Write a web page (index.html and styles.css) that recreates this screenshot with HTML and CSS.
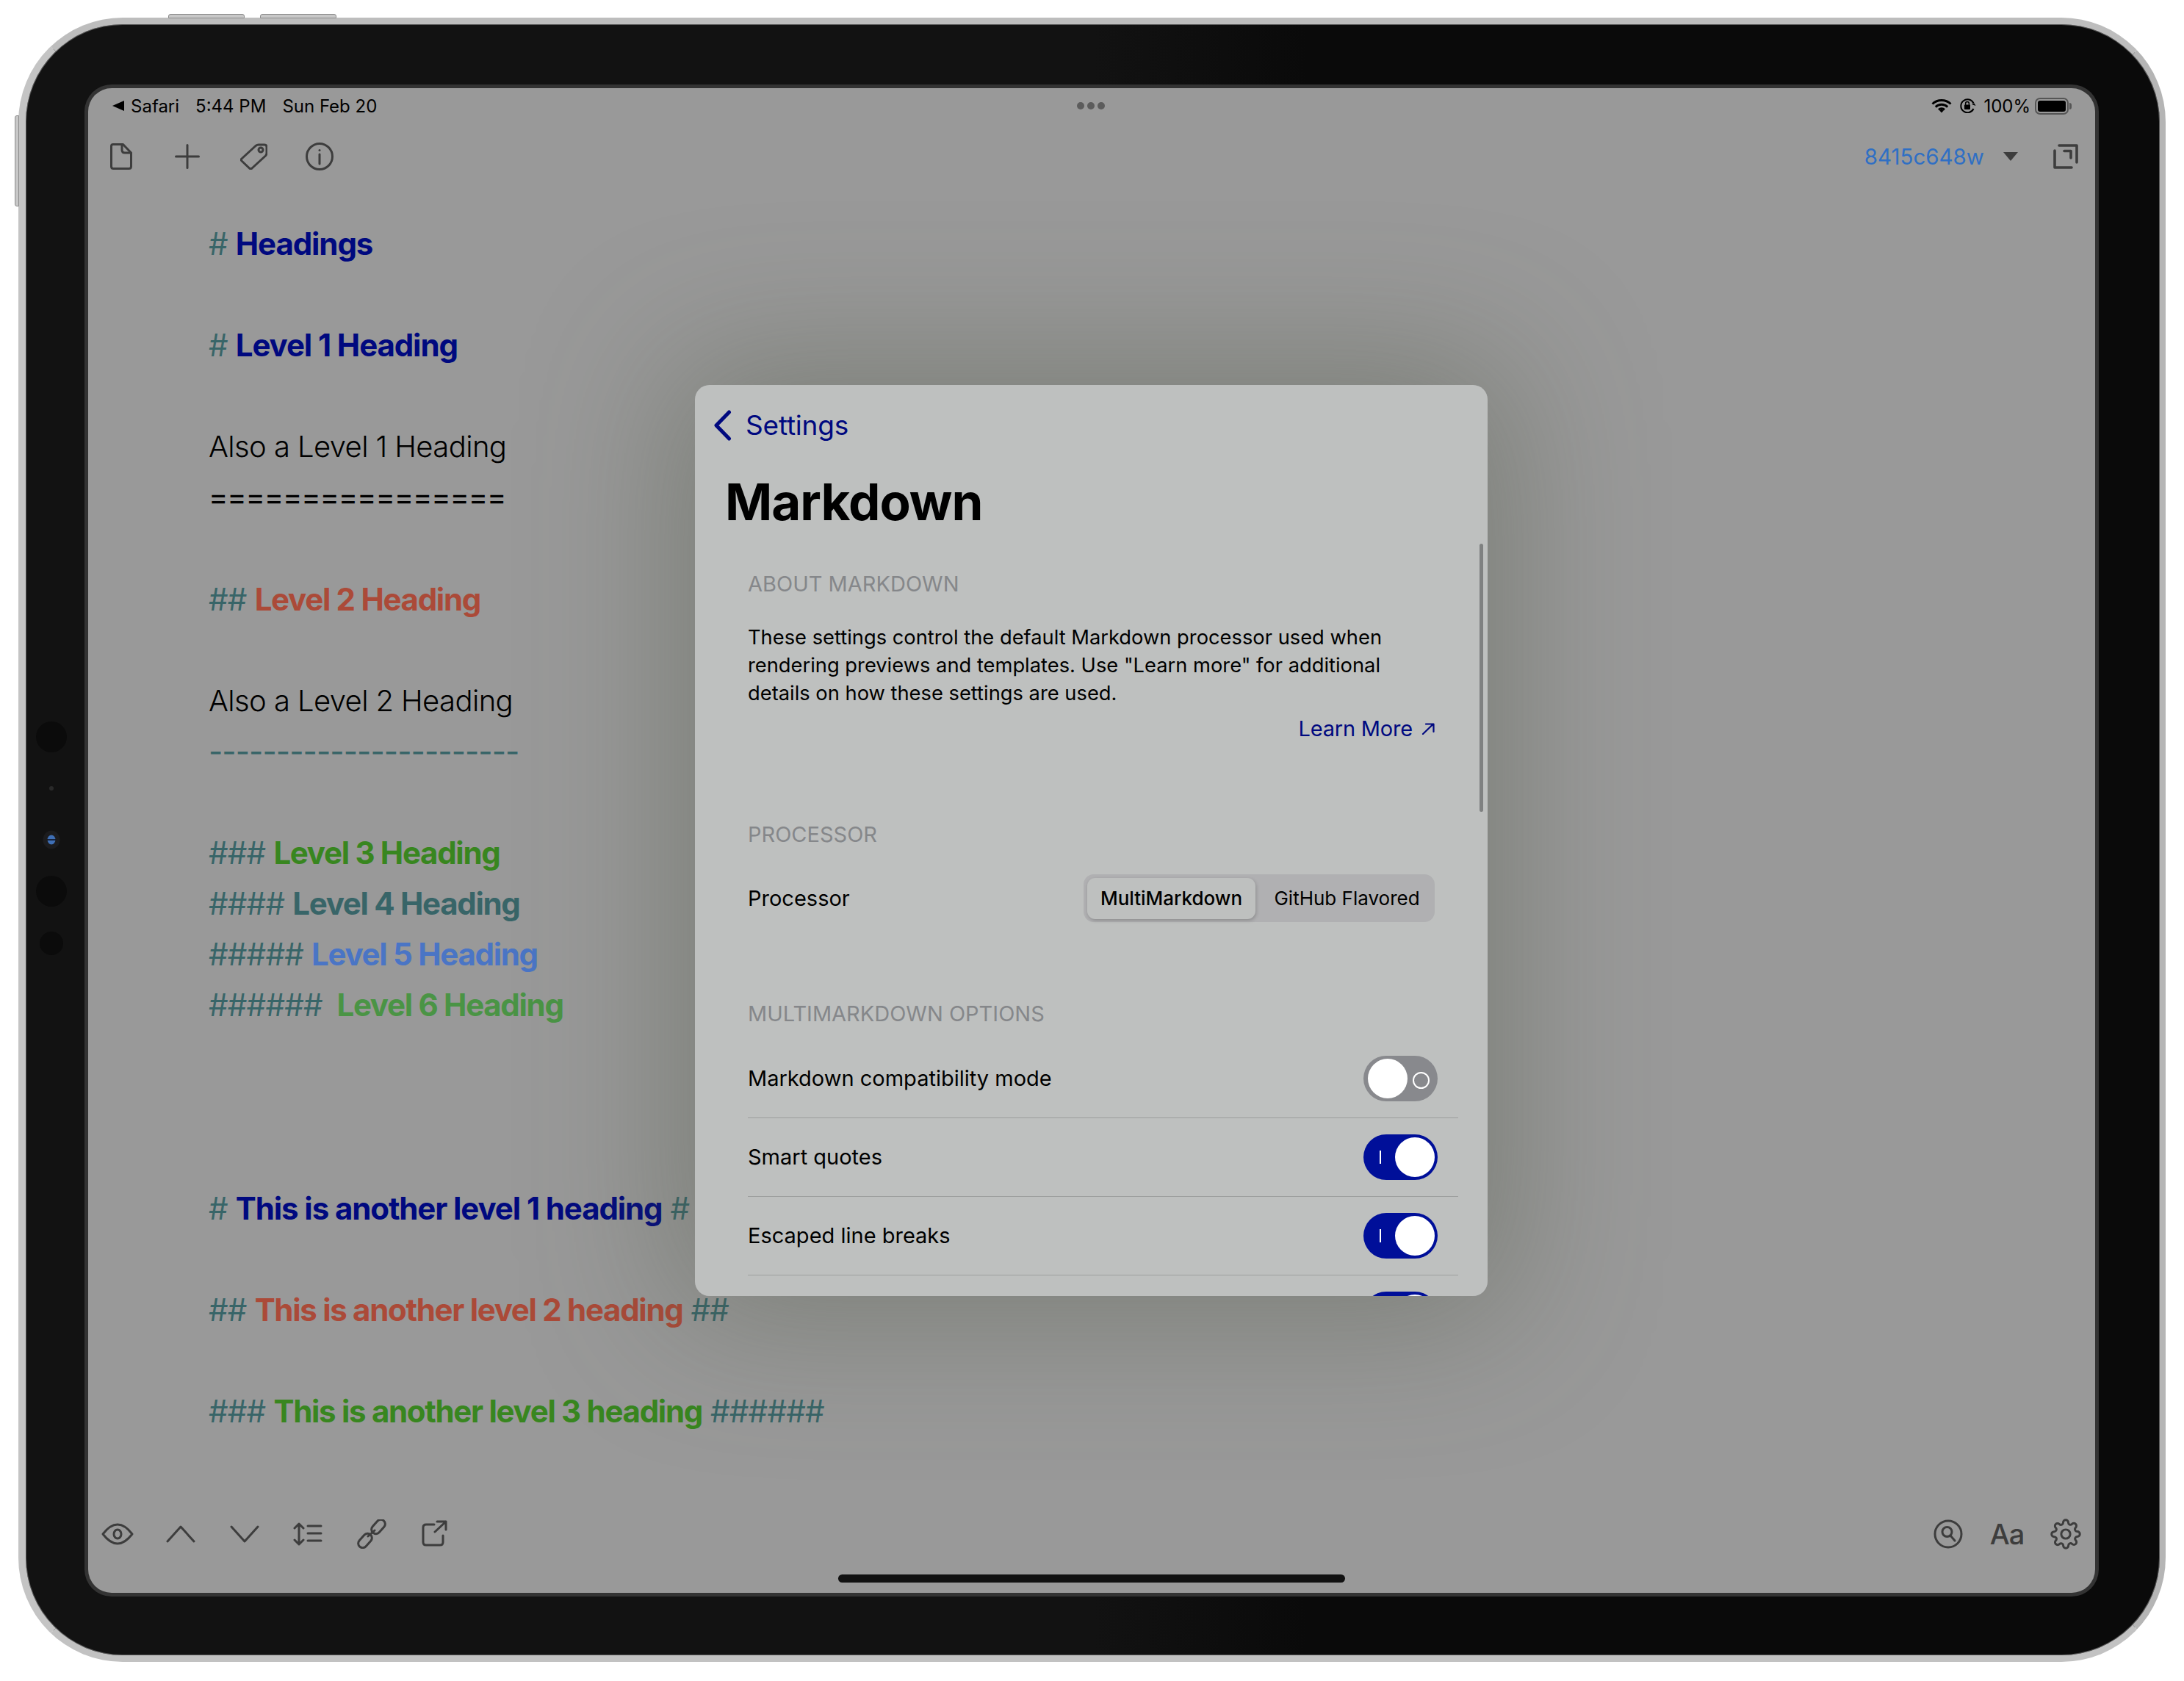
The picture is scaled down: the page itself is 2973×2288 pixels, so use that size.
FILE: index.html
```html
<!DOCTYPE html>
<html lang="en">
<head>
  <meta charset="UTF-8">
  <title>Markdown settings</title>
  <link rel="stylesheet" href="styles.css">
</head>
<body>
  <div class="device">
    <!-- hardware buttons -->
    <span class="hw hw-top-a"></span>
    <span class="hw hw-top-b"></span>
    <span class="hw hw-left"></span>

    <!-- camera cluster on the left bezel -->
    <span class="cam cam-a"></span>
    <span class="cam cam-dot"></span>
    <span class="cam cam-lens"></span>
    <span class="cam cam-b"></span>
    <span class="cam cam-c"></span>

    <div class="screen">
      <div class="status-bar">
        <div class="status-left">
          <span class="back-arrow"></span>
          <span class="status-app">Safari</span>
          <span class="status-time">5:44 PM</span>
          <span>Sun Feb 20</span>
        </div>
        <div class="status-dots"><i></i><i></i><i></i></div>
        <div class="status-right">
          <svg class="wifi" width="28" height="20" viewBox="0 0 28 20">
            <path d="M1.500 7.500a18 18 0 0 1 25 0M5.800 11.600a12 12 0 0 1 16.400 0M10 15.400a6 6 0 0 1 8 0" fill="none" stroke="#000" stroke-width="3"/>
            <path d="M11.200 16.600l2.800-2.400 2.800 2.400-2.800 3z" fill="#000"/>
          </svg>
          <svg class="lock" width="24" height="20" viewBox="0 0 24 20">
            <path d="M19.500 6.500A9 9 0 1 0 19.500 14" fill="none" stroke="#000" stroke-width="2"/>
            <path d="M17 8l3.500-1.500 2 3.500z" fill="#000"/>
            <rect x="7" y="8.500" width="8" height="6.500" rx="1" fill="#000"/>
            <path d="M8.600 9V7a2.400 2.400 0 0 1 4.800 0v2" fill="none" stroke="#000" stroke-width="1.500"/>
          </svg>
          <span class="battery-pct">100%</span>
          <span class="battery"><i></i></span>
        </div>
      </div>

      <div class="toolbar">
        <div class="tool-group top-left">
          <span class="tool"><svg width="30" height="36" viewBox="0 0 30 36"><path d="M4 1.500H17.500L28.500 13V31.500Q28.500 34.500 25.500 34.500H4.500Q1.500 34.500 1.500 31.500V4Q1.500 1.500 4 1.500Z"/><path d="M16 2V9Q16 13 20 13H28"/></svg></span>
          <span class="tool"><svg width="34" height="34" viewBox="0 0 34 34"><path d="M17 1.500V32.500M1.500 17H32.500"/></svg></span>
          <span class="tool"><svg width="37" height="36" viewBox="0 0 37 36"><path d="M2 21L21 3.500Q23 2 25 2H33Q36 2 36 5V13Q36 15.500 34.500 17L16 34Q14 35.500 12.500 34L2 24Q0.500 22.500 2 21Z"/><circle cx="28" cy="9" r="3"/></svg></span>
          <span class="tool"><svg width="38" height="38" viewBox="0 0 38 38"><circle cx="19" cy="19" r="17.500"/><path d="M19 16V29"/><circle class="solid" cx="19" cy="10.500" r="1.500"/></svg></span>
        </div>
        <div class="version-picker">
          <span class="version">8415c648w</span>
          <span class="caret"></span>
          <svg class="tool-svg heavy" width="34" height="34" viewBox="0 0 34 34"><path d="M8 2H32V25"/><path d="M15 9.500H24V19"/><path d="M2 9V32H25"/></svg>
        </div>
      </div>

      <main class="editor">
        <div class="line h1"><b># </b>Headings</div>
        <div class="line"></div>
        <div class="line h1"><b># </b>Level 1 Heading</div>
        <div class="line"></div>
        <div class="line plain">Also a Level 1 Heading</div>
        <div class="line rule">================</div>
        <div class="line"></div>
        <div class="line h2"><b>## </b>Level 2 Heading</div>
        <div class="line"></div>
        <div class="line plain">Also a Level 2 Heading</div>
        <div class="line marker">-----------------------</div>
        <div class="line"></div>
        <div class="line h3"><b>### </b>Level 3 Heading</div>
        <div class="line h4"><b>#### </b>Level 4 Heading</div>
        <div class="line h5"><b>##### </b>Level 5 Heading</div>
        <div class="line h6"><b>###### </b> Level 6 Heading</div>
        <div class="line"></div>
        <div class="line"></div>
        <div class="line"></div>
        <div class="line h1"><b># </b>This is another level 1 heading<b> #</b></div>
        <div class="line"></div>
        <div class="line h2"><b>## </b>This is another level 2 heading<b> ##</b></div>
        <div class="line"></div>
        <div class="line h3"><b>### </b>This is another level 3 heading<b> ######</b></div>
      </main>

      <div class="bottom-bar">
        <div class="tool-group bottom-left">
          <span class="tool"><svg width="44" height="30" viewBox="0 0 44 30"><path d="M2 15Q12 2 22 2T42 15Q32 28 22 28T2 15Z"/><ellipse cx="22" cy="15" rx="5" ry="6"/></svg></span>
          <span class="tool"><svg width="40" height="24" viewBox="0 0 40 24"><path d="M2 22L20 2L38 22"/></svg></span>
          <span class="tool"><svg width="40" height="24" viewBox="0 0 40 24"><path d="M2 2L20 22L38 2"/></svg></span>
          <span class="tool"><svg width="40" height="32" viewBox="0 0 40 32"><path d="M8 2V30M2 8L8 2L14 8M2 24L8 30L14 24M20 5H38M20 15H38M20 25H38"/></svg></span>
          <span class="tool"><svg width="40" height="40" viewBox="0 0 40 40"><rect x="18" y="4" width="22" height="12" rx="6" transform="rotate(-48 29 10)"/><rect x="0" y="23" width="22" height="12" rx="6" transform="rotate(-48 11 29)"/><path d="M15 23L24 15"/></svg></span>
          <span class="tool"><svg width="36" height="38" viewBox="0 0 36 38"><path d="M17 6H6Q2 6 2 10V30Q2 34 6 34H25Q29 34 29 30V21"/><path d="M18 16L33 2M21 2H33V13"/></svg></span>
        </div>
        <div class="tool-group bottom-right">
          <span class="tool"><svg width="40" height="40" viewBox="0 0 40 40"><circle cx="20" cy="20" r="18"/><circle cx="18.500" cy="17" r="6.500"/><path d="M23 22L29 29"/></svg></span>
          <span class="tool aa">Aa</span>
          <span class="tool"><svg width="42" height="42" viewBox="0 0 24 24"><circle class="thin" cx="12" cy="12" r="3.500"/><path class="thin" d="M19.400 15a1.650 1.650 0 0 0 .33 1.820l.06.06a2 2 0 0 1 0 2.830 2 2 0 0 1-2.830 0l-.06-.06a1.650 1.650 0 0 0-1.820-.33 1.650 1.650 0 0 0-1 1.510V21a2 2 0 0 1-2 2 2 2 0 0 1-2-2v-.09A1.650 1.650 0 0 0 9 19.400a1.650 1.650 0 0 0-1.820.33l-.06.06a2 2 0 0 1-2.830 0 2 2 0 0 1 0-2.830l.06-.06a1.650 1.650 0 0 0 .33-1.820 1.650 1.650 0 0 0-1.510-1H3a2 2 0 0 1-2-2 2 2 0 0 1 2-2h.09A1.650 1.650 0 0 0 4.600 9a1.650 1.650 0 0 0-.33-1.820l-.06-.06a2 2 0 0 1 0-2.830 2 2 0 0 1 2.830 0l.06.06a1.650 1.650 0 0 0 1.820.33H9a1.650 1.650 0 0 0 1-1.510V3a2 2 0 0 1 2-2 2 2 0 0 1 2 2v.09a1.650 1.650 0 0 0 1 1.510 1.650 1.650 0 0 0 1.820-.33l.06-.06a2 2 0 0 1 2.830 0 2 2 0 0 1 0 2.830l-.06.06a1.650 1.650 0 0 0-.33 1.820V9a1.650 1.650 0 0 0 1.510 1H21a2 2 0 0 1 2 2 2 2 0 0 1-2 2h-.09a1.650 1.650 0 0 0-1.510 1z"/></svg></span>
        </div>
      </div>

      <span class="home-indicator"></span>

      <!-- Settings-Popover -->
      <section class="modal">
        <span class="scrollbar"></span>
        <div class="modal-nav">
          <svg width="25" height="42" viewBox="0 0 25 42"><path d="M21.500 3L4 21L21.500 39"/></svg>
          <span>Settings</span>
        </div>
        <h1 class="modal-title">Markdown</h1>
        <div class="modal-body">
          <h2 class="section-label about-label">ABOUT MARKDOWN</h2>
          <p class="about-text">These settings control the default Markdown processor used when<br>rendering previews and templates. Use "Learn more" for additional<br>details on how these settings are used.</p>
          <div class="learn-more">Learn More
            <svg width="18" height="16" viewBox="0 0 18 16"><path d="M2 15L16 1.500M6 1.500H16.500V12"/></svg>
          </div>

          <h2 class="section-label spaced">PROCESSOR</h2>
          <div class="processor-row">
            <span>Processor</span>
            <div class="segmented">
              <span class="segment active">MultiMarkdown</span>
              <span class="segment other">GitHub Flavored</span>
            </div>
          </div>

          <h2 class="section-label spaced">MULTIMARKDOWN OPTIONS</h2>
          <ul class="options">
            <li class="option"><span>Markdown compatibility mode</span><span class="toggle off"></span></li>
            <li class="option"><span>Smart quotes</span><span class="toggle on"></span></li>
            <li class="option"><span>Escaped line breaks</span><span class="toggle on"></span></li>
            <li class="option"><span>&nbsp;</span><span class="toggle on"></span></li>
          </ul>
        </div>
      </section>
    </div>
  </div>
</body>
</html>
```

FILE: styles.css
```css
:root {
  --navy: #00097f;
  --teal: #386568;
  --icon: #3d3d3d;
  --screen: #999999;
  --modal: #bec0bf;
  --toggle-on: #000f99;
}

* {
  margin: 0;
  padding: 0;
  box-sizing: border-box;
}

html, body {
  width: 2973px;
  height: 2288px;
  overflow: hidden;
}

body {
  background: #fff;
  font-family: Inter, "Noto Sans", sans-serif;
  color: #000;
  padding: 24px 25px 0;
}

/* device frame */
.device {
  position: relative;
  width: 2923px;
  height: 2238px;
  padding: 87px 0 0 85px;
  border-radius: 142px;
  background: linear-gradient(90deg, #121212 0%, #121212 50%, #0a0a0a 60%, #0a0a0a 100%);
  border-style: solid;
  border-width: 9px 8px 9px 10px;
  border-color: #bdbdbd #b5b5b5 #c2c2c2 #c4c4c4;
  box-shadow: inset 0 0 0 1px #555;
}

.hw {
  position: absolute;
  background: #c8c8c8;
  border: 1px solid #8c8c8c;
}

.hw-top-a { left: 194px; top: -14px; width: 104px; height: 6px; border-radius: 3px 3px 0 0; }
.hw-top-b { left: 319px; top: -14px; width: 104px; height: 6px; border-radius: 3px 3px 0 0; }
.hw-left { left: -15px; top: 124px; width: 6px; height: 124px; border-radius: 3px 0 0 3px; }

.cam {
  position: absolute;
  border-radius: 50%;
  background: #0b0b0b;
  transform: translate(-50%, -50%);
}

.cam-a { left: 35px; top: 970px; width: 42px; height: 42px; }
.cam-dot { left: 35px; top: 1040px; width: 6px; height: 6px; background: #2a2a2a; }
.cam-lens {
  left: 35px;
  top: 1110px;
  width: 11px;
  height: 13px;
  background: linear-gradient(#3f6fb5 0 40%, #14233f 40% 60%, #3f6fb5 60%);
  box-shadow: 0 0 0 6px #1c1c1e;
}
.cam-b { left: 35px; top: 1180px; width: 42px; height: 42px; }
.cam-c { left: 35px; top: 1251px; width: 32px; height: 32px; }

.screen {
  position: relative;
  width: 2732px;
  height: 2048px;
  display: flex;
  flex-direction: column;
  background: var(--screen);
  border-radius: 32px;
  box-shadow: 0 0 0 5px #333;
  overflow: hidden;
}

/* status bar */
.status-bar {
  height: 48px;
  flex: none;
  display: grid;
  grid-template-columns: 1fr auto 1fr;
  align-items: center;
  padding: 0 36px 0 33px;
  font-size: 24px;
}

.status-left {
  display: flex;
  align-items: center;
}

.back-arrow {
  width: 0;
  height: 0;
  border-top: 7px solid transparent;
  border-bottom: 7px solid transparent;
  border-right: 16px solid #000;
  margin-right: 9px;
}

.status-app { margin-right: 22px; }
.status-time { margin-right: 22px; }

.status-dots {
  display: flex;
  gap: 4px;
}

.status-dots i {
  width: 10px;
  height: 10px;
  border-radius: 50%;
  background: #5c5c5c;
}

.status-right {
  display: flex;
  align-items: center;
  justify-content: flex-end;
}

.wifi { margin-right: 10px; }
.lock { margin-right: 9px; }
.battery-pct { margin-right: 6px; }

.battery {
  width: 46px;
  height: 23px;
  border: 2px solid #555;
  border-radius: 7px;
  padding: 2px;
  position: relative;
}

.battery i {
  display: block;
  height: 100%;
  background: #000;
  border-radius: 3px;
}

.battery::after {
  content: "";
  position: absolute;
  right: -6px;
  top: 5px;
  width: 3px;
  height: 9px;
  background: #555;
  border-radius: 0 3px 3px 0;
}

/* toolbars */
.toolbar, .bottom-bar {
  flex: none;
  height: 48px;
  display: flex;
  align-items: center;
  justify-content: space-between;
}

.toolbar { margin-top: 21px; }

.bottom-bar {
  margin-bottom: 56px;
  padding: 0 20px;
}

.tool-group {
  display: flex;
  align-items: center;
}

.top-left { padding-left: 25px; gap: 50px; }
.bottom-left { gap: 46.4px; }
.bottom-right { gap: 40px; }

.tool {
  width: 40px;
  height: 48px;
  display: flex;
  align-items: center;
  justify-content: center;
}

.tool svg, .tool-svg, .modal-nav svg, .learn-more svg {
  flex: none;
  fill: none;
  stroke: var(--icon);
  stroke-width: 3;
  stroke-linecap: round;
  stroke-linejoin: round;
}

.tool-svg.heavy { stroke-width: 3.6; }

.tool .solid {
  fill: var(--icon);
  stroke: none;
}

.tool .thin { stroke-width: 1.7; }

.aa {
  font-size: 38px;
  font-weight: 500;
  color: var(--icon);
  letter-spacing: -1px;
}

.version-picker {
  display: flex;
  align-items: center;
  padding-right: 23px;
}

.version {
  font-size: 29.5px;
  color: #2f6fc4;
  margin-right: 26px;
}

.caret {
  width: 0;
  height: 0;
  border-left: 10px solid transparent;
  border-right: 10px solid transparent;
  border-top: 12px solid var(--icon);
  margin-right: 48px;
}

/* editor */
.editor {
  flex: 1;
  padding: 60px 0 0 164px;
  font-size: 42px;
  line-height: 69.1px;
}

.line {
  height: 69.1px;
  white-space: pre;
}

.line b {
  font-weight: 400;
  letter-spacing: -0.8px;
  color: var(--teal);
}

.h1, .h2, .h3, .h4, .h5, .h6 { font-weight: 700; }
.h1 { color: var(--navy); letter-spacing: -1.1px; }
.h2, .h3, .h4, .h5, .h6 { letter-spacing: -1.3px; }
.h2 { color: #ab4a38; }
.h3 { color: #38861f; }
.h4 { color: var(--teal); }
.h5 { color: #4a75c5; }
.h6 { color: #4a9445; }

.plain {
  font-size: 40px;
  font-weight: 300;
  letter-spacing: -0.6px;
}

.rule {
  font-size: 40px;
  letter-spacing: -1.2px;
}

.marker {
  color: var(--teal);
  letter-spacing: -0.95px;
}

.home-indicator {
  position: absolute;
  left: 1021px;
  top: 2023px;
  width: 690px;
  height: 11px;
  border-radius: 6px;
  background: #111;
}

/* modal */
.modal {
  position: absolute;
  left: 826px;
  top: 404px;
  width: 1079px;
  height: 1240px;
  overflow: hidden;
  background: var(--modal);
  border-radius: 20px;
  font-size: 29px;
  line-height: 38px;
  z-index: 1;
}

.screen::after {
  content: "";
  position: absolute;
  left: 826px;
  top: 404px;
  width: 1079px;
  height: 1240px;
  border-radius: 20px;
  box-shadow: 0 0 200px 30px rgba(75, 85, 65, 0.38);
  pointer-events: none;
}

.scrollbar {
  position: absolute;
  right: 6px;
  top: 216px;
  width: 5px;
  height: 365px;
  border-radius: 3px;
  background: #7f8181;
}

.modal-nav {
  display: flex;
  align-items: center;
  gap: 19px;
  height: 54px;
  margin-top: 28px;
  padding-left: 25px;
  font-size: 37px;
  letter-spacing: -0.2px;
  color: var(--navy);
}

.modal-nav svg {
  stroke: var(--navy);
  stroke-width: 5;
}

.modal-title {
  margin: 37px 0 0 41px;
  font-size: 69px;
  line-height: 80px;
  font-weight: 700;
  letter-spacing: -1px;
}

.modal-body { padding: 0 40px 0 72px; }

.section-label {
  font-size: 29px;
  line-height: 36px;
  font-weight: 400;
  color: #85878a;
}

.about-label { margin-top: 54px; }
.spaced { margin-top: 107px; }

.about-text {
  margin-top: 36px;
  font-size: 27.3px;
}

.learn-more {
  margin: 10px 32px 0 0;
  display: flex;
  justify-content: flex-end;
  align-items: center;
  gap: 12px;
  letter-spacing: -0.2px;
  color: var(--navy);
}

.learn-more svg {
  stroke: var(--navy);
  stroke-width: 2.2;
}

.processor-row {
  margin: 36px 32px 0 0;
  display: flex;
  align-items: center;
  justify-content: space-between;
}

.segmented {
  display: flex;
  align-items: center;
  width: 478px;
  height: 65px;
  padding: 5px;
  border-radius: 14px;
  background: #b0b0b2;
  font-size: 26px;
}

.segment {
  flex: 1;
  text-align: center;
  white-space: nowrap;
}

.segment.other { padding-left: 10px; }

.segment.active {
  flex: none;
  width: 229px;
  height: 56px;
  line-height: 56px;
  font-weight: 500;
  background: var(--modal);
  border-radius: 11px;
  box-shadow: 1px 2px 5px rgba(0, 0, 0, 0.2);
}

.options {
  list-style: none;
  margin-top: 17px;
}

.option {
  height: 107px;
  display: flex;
  align-items: center;
  justify-content: space-between;
  padding-right: 28px;
  border-bottom: 1.500px solid #9c9e9d;
}

.toggle {
  position: relative;
  width: 101px;
  height: 62px;
  border-radius: 31px;
}

.toggle::before {
  content: "";
  position: absolute;
  top: 4px;
  width: 54px;
  height: 54px;
  border-radius: 50%;
  background: #fff;
}

.toggle::after {
  content: "";
  position: absolute;
}

.toggle.off { background: #88898d; }
.toggle.off::before { left: 6px; }
.toggle.off::after {
  left: 67px;
  top: 22px;
  width: 19px;
  height: 19px;
  border: 2px solid #fff;
  border-radius: 50%;
}

.toggle.on { background: var(--toggle-on); }
.toggle.on::before { right: 4px; }
.toggle.on::after {
  left: 22px;
  top: 22px;
  width: 2px;
  height: 18px;
  background: #fff;
}
```
